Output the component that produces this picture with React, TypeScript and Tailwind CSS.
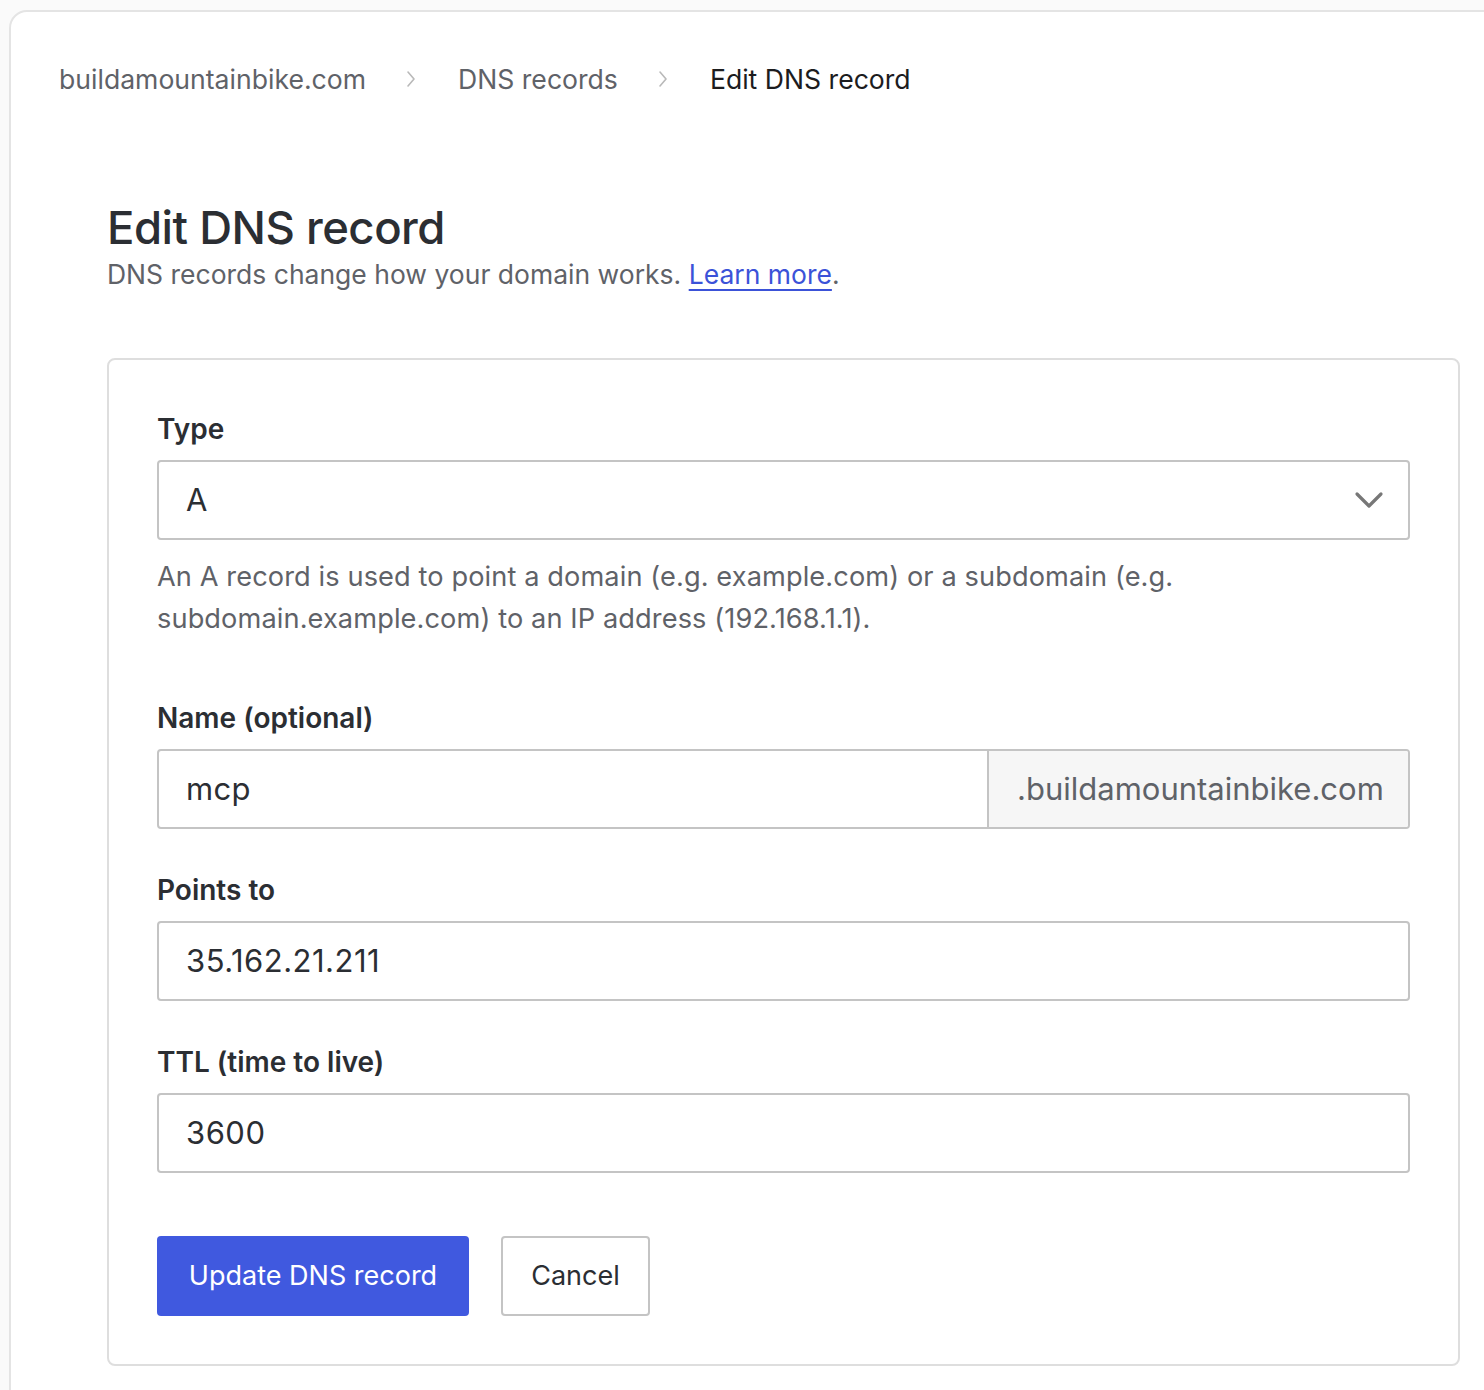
const font = { fontFamily: "Inter, 'Noto Sans', sans-serif" };

function Crumb() {
  return (
    <svg width="10" height="18" viewBox="0 0 10 18" fill="none" className="shrink-0">
      <path d="M2 2l6 7-6 7" stroke="#b9b9b9" strokeWidth="1.6" strokeLinecap="round" strokeLinejoin="round" />
    </svg>
  );
}

function Field({ label, children, className = "" }: { label: string; children: React.ReactNode; className?: string }) {
  return (
    <div className={className}>
      <div className="h-[36px] mb-[14px] text-[28px] leading-[38px] font-semibold text-[#2b2e33]">{label}</div>
      {children}
    </div>
  );
}

export default function App() {
  return (
    <div className="w-[1484px] h-[1390px] overflow-hidden bg-[#fafafa] pl-[9px] pt-[10px]" style={font}>
      <div className="w-[1520px] min-h-[1420px] bg-white border-2 border-[#e4e4e4] rounded-[18px] pl-[48px] pt-[47px]">
        {/* Breadcrumb */}
        <nav className="flex items-center h-[40px] text-[26.6px] leading-[40px]">
          <span className="text-[#5f6268]">buildamountainbike.com</span>
          <span className="ml-[40px] mr-[42px] flex items-center"><Crumb /></span>
          <span className="text-[#5f6268]">DNS records</span>
          <span className="ml-[40px] mr-[42px] flex items-center"><Crumb /></span>
          <span className="text-[#1c1c1e]">Edit DNS record</span>
        </nav>

        <div className="pl-[48px] pt-[101px]">
          <h1 className="text-[45.5px] leading-[56px] font-medium text-[#2b2e33] tracking-[-0.5px]">Edit DNS record</h1>
          <p className="text-[26.5px] leading-[36px] text-[#5f6268]">
            DNS records change how your domain works.{" "}
            <a href="#" className="text-[#3b52d8] underline underline-offset-[5px] decoration-[2px]">Learn more</a>.
          </p>

          <div className="mt-[66px] w-[1353px] border-2 border-[#dedede] rounded-[8px] px-[48px] pt-[50px] pb-[48px]">
            <Field label="Type">
              <div className="h-[80px] border-2 border-[#c4c4c4] rounded-[4px] flex items-center justify-between pl-[27px] pr-[24px]">
                <span className="text-[31px] text-[#2b2e33]">A</span>
                <svg width="30" height="18" viewBox="0 0 30 18" fill="none">
                  <path d="M3 3l12 12 12-12" stroke="#777" strokeWidth="3.2" strokeLinecap="round" strokeLinejoin="round" />
                </svg>
              </div>
              <p className="mt-[16px] text-[27.2px] leading-[42px] tracking-[0.1px] text-[#5f6268]">
                An A record is used to point a domain (e.g. example.com) or a subdomain (e.g.
                <br />
                subdomain.example.com) to an IP address (192.168.1.1).
              </p>
            </Field>

            <Field label="Name (optional)" className="mt-[59px]">
              <div className="h-[80px] border-2 border-[#c4c4c4] rounded-[4px] flex overflow-hidden text-[31px]">
                <div className="flex-1 flex items-center pl-[27px] tracking-[0.3px] text-[#2b2e33]">mcp</div>
                <div className="w-[421px] border-l-2 border-[#c4c4c4] bg-[#f6f6f6] flex items-center pl-[28px] text-[#5f6268]">
                  .buildamountainbike.com
                </div>
              </div>
            </Field>

            <Field label="Points to" className="mt-[42px]">
              <div className="h-[80px] border-2 border-[#c4c4c4] rounded-[4px] flex items-center pl-[27px] text-[31px] tracking-[0.5px] text-[#2b2e33]">
                35.162.21.211
              </div>
            </Field>

            <Field label="TTL (time to live)" className="mt-[42px]">
              <div className="h-[80px] border-2 border-[#c4c4c4] rounded-[4px] flex items-center pl-[27px] text-[31px] tracking-[0.5px] text-[#2b2e33]">
                3600
              </div>
            </Field>

            <div className="mt-[63px] flex gap-[32px]">
              <button className="h-[80px] w-[312px] rounded-[4px] bg-[#4059df] text-white text-[27px]">Update DNS record</button>
              <button className="h-[80px] w-[149px] rounded-[4px] border-2 border-[#c4c4c4] bg-white text-[27px] text-[#2b2e33]">Cancel</button>
            </div>
          </div>
        </div>
      </div>
    </div>
  );
}
